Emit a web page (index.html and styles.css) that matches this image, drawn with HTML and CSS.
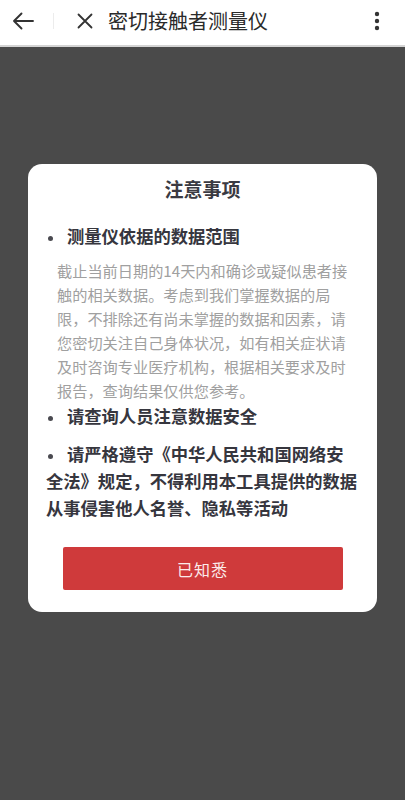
FILE: index.html
```html
<!DOCTYPE html>
<html lang="zh-CN">
<head>
<meta charset="utf-8">
<meta name="viewport" content="width=device-width, initial-scale=1">
<title>密切接触者测量仪</title>
<link rel="stylesheet" href="styles.css">
</head>
<body>
<header class="topbar">
  <button class="icon-btn back" aria-label="返回">
    <svg width="22" height="18" viewBox="0 0 22 18"><path d="M21 9H2M9.5 1.5L2 9l7.5 7.5" fill="none" stroke="#333" stroke-width="1.9" stroke-linecap="round" stroke-linejoin="round"/></svg>
  </button>
  <span class="sep"></span>
  <button class="icon-btn close" aria-label="关闭">
    <svg width="16" height="16" viewBox="0 0 16 16"><path d="M1.5 1.5l13 13M14.5 1.5l-13 13" fill="none" stroke="#333" stroke-width="1.8" stroke-linecap="round"/></svg>
  </button>
  <h1 class="page-title">密切接触者测量仪</h1>
  <button class="icon-btn more" aria-label="更多">
    <svg width="6" height="20" viewBox="0 0 6 20"><circle cx="3" cy="3" r="2.2" fill="#333"/><circle cx="3" cy="10" r="2.2" fill="#333"/><circle cx="3" cy="17" r="2.2" fill="#333"/></svg>
  </button>
</header>
<main class="overlay">
  <section class="dialog">
    <h2 class="dialog-title">注意事项</h2>
    <p class="item item-first"><span class="dot"></span>测量仪依据的数据范围</p>
    <p class="desc">截止当前日期的14天内和确诊或疑似患者接触的相关数据。考虑到我们掌握数据的局限，不排除还有尚未掌握的数据和因素，请您密切关注自己身体状况，如有相关症状请及时咨询专业医疗机构，根据相关要求及时报告，查询结果仅供您参考。</p>
    <p class="item item-second"><span class="dot"></span>请查询人员注意数据安全</p>
    <p class="item item-third"><span class="dot"></span>请严格遵守《中华人民共和国网络安全法》规定，不得利用本工具提供的数据从事侵害他人名誉、隐私等活动</p>
    <button class="confirm">已知悉</button>
  </section>
</main>
</body>
</html>
```
FILE: styles.css
```css
* { box-sizing: border-box; }
html, body {
  margin: 0;
  padding: 0;
}
body {
  width: 405px;
  height: 800px;
  background: #4a4a4a;
  font-family: "Noto Sans CJK SC", "Noto Sans", sans-serif;
  overflow: hidden;
}
.topbar {
  height: 47px;
  background: #fff;
  border-bottom: 2px solid #d4d4d4;
  display: flex;
  align-items: center;
  padding-bottom: 3px;
}
.icon-btn {
  border: 0;
  background: none;
  padding: 0;
  display: flex;
  align-items: center;
  justify-content: center;
}
.back {
  width: 22px;
  margin-left: 12px;
}
.sep {
  width: 1px;
  height: 16px;
  background: #ececec;
  margin-left: 19px;
}
.close {
  width: 16px;
  margin-left: 23px;
}
.page-title {
  margin: 0 0 0 15px;
  font-size: 20px;
  font-weight: 400;
  color: #2a2a2a;
  line-height: 26px;
  flex: 1;
}
.more {
  width: 6px;
  margin-right: 25px;
}
.overlay {
  padding-top: 117px;
}
.dialog {
  width: 349px;
  margin: 0 auto;
  background: #fff;
  border-radius: 14px;
  padding: 12px 18px 22px;
}
.dialog-title {
  margin: 0;
  text-align: center;
  font-size: 19px;
  line-height: 26px;
  font-weight: 700;
  color: #3a3a42;
}
.item {
  margin: 0;
  font-size: 17.3px;
  font-weight: 700;
  color: #36363e;
  line-height: 26px;
}
.dot {
  display: inline-block;
  width: 21px;
  height: 10px;
}
.dot::before {
  content: "";
  display: block;
  width: 5px;
  height: 5px;
  margin: 3px 0 0 2px;
  border-radius: 50%;
  background: #4a4a50;
}
.item-first { margin-top: 21px; }
.item-second { margin-top: 1px; }
.item-third { margin-top: 11px; line-height: 27px; }
.desc {
  margin: 9px 6px 0 11px;
  font-size: 15.2px;
  line-height: 24px;
  color: #a0a0a0;
}
.confirm {
  display: block;
  width: 280px;
  height: 43px;
  margin: 26px auto 0;
  border: 0;
  border-radius: 2px;
  background: #cf3a3b;
  color: #fbeaea;
  font-family: "Noto Sans CJK SC", "Noto Sans", sans-serif;
  font-size: 16px;
  letter-spacing: 1px;
}
```
